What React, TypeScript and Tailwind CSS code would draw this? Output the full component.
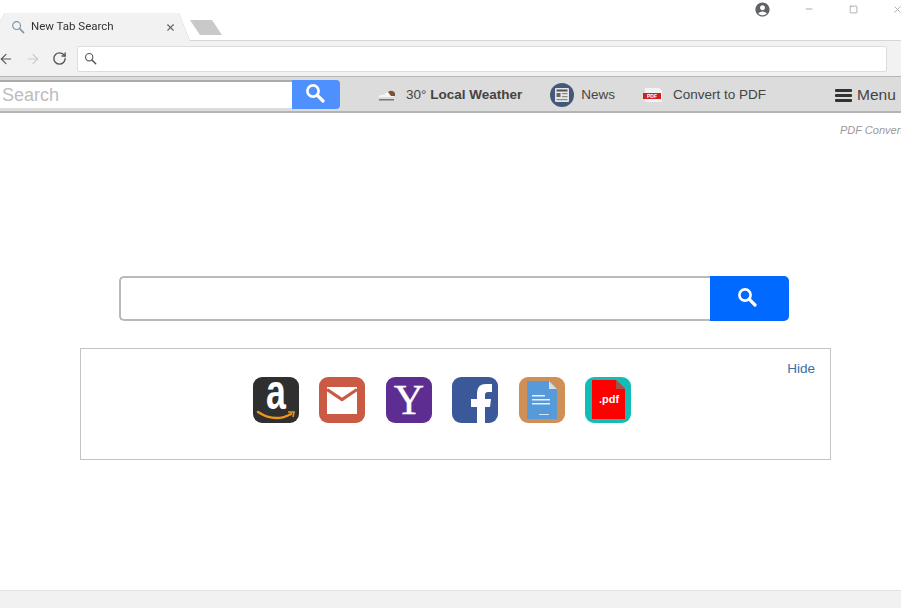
import type { ReactNode } from 'react';
import { ArrowLeft, ArrowRight, RotateCw, X, Minus, Square } from 'lucide-react';
import { MdAccountCircle } from 'react-icons/md';

const sans = 'font-["Liberation_Sans",Arial,sans-serif]';

const Tile = ({ className, children }: { className: string; children: ReactNode }) => (
  <div className={`w-[46px] h-[46px] rounded-[9px] overflow-hidden ${className}`}>
    <svg viewBox="0 0 46 46" className="w-full h-full">{children}</svg>
  </div>
);

// magnifier with a short heavy handle, like the one in the reference
const Glass = ({ className, width = 2.4 }: { className: string; width?: number }) => (
  <svg viewBox="0 0 20 20" className={className} fill="none" stroke="currentColor">
    <circle cx="8" cy="8" r="5.6" strokeWidth={width} />
    <path d="M12.2 12.2 L18 18" strokeWidth={width + 0.6} strokeLinecap="round" />
  </svg>
);

export default function App() {
  return (
    <div className={`w-[908px] h-[608px] bg-white overflow-hidden ${sans}`}>
      <div className="w-[901px] h-full flex flex-col overflow-hidden">
        {/* tab strip */}
        <div className="h-[41px] flex items-end relative shrink-0 border-b border-[#d6d6d6]">
          <div className="-mb-px [filter:drop-shadow(0_0_0.6px_#aaa)]">
            <div className="w-[190px] h-[28px] bg-[#f2f2f2] flex items-center pl-[11px] font-['Roboto',sans-serif] [clip-path:polygon(0_8px,5px_0,179px_0,190px_100%,0_100%)]">
              <Glass className="w-[14px] h-[14px] text-[#7d93a8]" width={1.6} />
              <span className="ml-[6px] text-[11.5px] text-[#333]">New Tab Search</span>
              <X size={11} strokeWidth={2.5} className="ml-[51px] text-[#666]" />
            </div>
          </div>
          <div className="w-[32px] h-[15px] mb-[5px] bg-[#c9c9c9] [clip-path:polygon(0_0,22px_0,100%_100%,10px_100%)]" />
          <MdAccountCircle size={17} className="absolute left-[754px] top-[1px] text-[#5f6368]" />
          <Minus size={10} className="absolute left-[804px] top-[4px] text-[#999]" />
          <Square size={9} strokeWidth={1.5} className="absolute left-[849px] top-[5px] text-[#777]" />
          <X size={11} className="absolute left-[892px] top-[4px] text-[#aaa]" />
        </div>

        {/* address bar */}
        <div className="h-[35px] bg-[#f2f2f2] flex items-center shrink-0 pr-[14px]">
          <ArrowLeft size={16} strokeWidth={1.6} className="-ml-[2px] text-[#555]" />
          <ArrowRight size={16} strokeWidth={1.6} className="ml-[11px] text-[#c8c8c8]" />
          <RotateCw size={15} strokeWidth={2.2} className="ml-[11px] text-[#555]" />
          <div className="ml-[10px] flex-1 h-[26px] bg-white border border-[#dcdcdc] rounded-[2px] flex items-center pl-[6px]">
            <Glass className="w-[13px] h-[13px] text-[#555]" width={1.7} />
          </div>
        </div>

        {/* search toolbar */}
        <div className="h-[37px] bg-[#dcdcdc] border-t border-b-2 border-[#b4b4b4] flex items-center shrink-0 text-[13.5px] text-[#444]">
          <div className="w-[292px] h-[28px] bg-white border-t-2 border-[#aaa] flex items-center pl-[2px] text-[18px] text-[#bdbdbd]">Search</div>
          <div className="w-[48px] h-[29px] bg-[#4d90fe] rounded-r-[4px] flex items-center justify-center">
            <Glass className="w-[20px] h-[20px] text-white mr-[3px] mb-[2px]" width={2.6} />
          </div>
          <div className="flex items-center mt-[2px]">
            <svg viewBox="0 0 20 12" className="ml-[37px] w-[20px] h-[12px]">
              <path d="M1 9 Q3 5 7 6 Q9 2 13 4 L17 8 H2Z" fill="#f7f7f7" />
              <path d="M11 3 Q15 0 18 4 L18 7 L14 7Z" fill="#7a5235" />
              <rect x="2" y="10" width="15" height="1.5" fill="#777" />
            </svg>
            <span className="ml-[9px]">30° <b>Local Weather</b></span>
            <svg viewBox="0 0 24 24" className="ml-[28px] w-[24px] h-[24px]">
              <circle cx="12" cy="12" r="12" fill="#44597a" />
              <rect x="5" y="5" width="14" height="14" rx="1" fill="#e6e6e6" />
              <rect x="6.5" y="6.5" width="11" height="2" fill="#555" />
              <rect x="6.5" y="10" width="4" height="4" fill="#666" />
              <rect x="12" y="10" width="5.5" height="1.2" fill="#888" />
              <rect x="12" y="13" width="5.5" height="1.2" fill="#888" />
              <rect x="6.5" y="16" width="11" height="1.2" fill="#888" />
            </svg>
            <span className="ml-[7px]">News</span>
            <svg viewBox="0 0 22 18" className="ml-[27px] w-[22px] h-[18px]">
              <path d="M3 2 H17 L20 5 V16 H3Z" fill="#f3f3f3" />
              <rect x="1" y="7" width="18" height="6" fill="#d01f1f" />
              <text x="10" y="12" textAnchor="middle" fontSize="5" fontWeight="700" fill="#fff" fontFamily="Liberation Sans">PDF</text>
            </svg>
            <span className="ml-[9px]">Convert to PDF</span>
            <div className="ml-[69px] w-[17px] h-[13px] flex flex-col justify-between">
              <div className="h-[3px] rounded-[1px] bg-[#333]" />
              <div className="h-[3px] rounded-[1px] bg-[#333]" />
              <div className="h-[3px] rounded-[1px] bg-[#333]" />
            </div>
            <span className="ml-[5px] text-[15.5px]">Menu</span>
          </div>
        </div>

        {/* page */}
        <div className="flex-1 relative flex flex-col overflow-hidden">
          <div className="absolute left-[840px] top-[9px] text-[11px] italic text-[#999] whitespace-nowrap">PDF Converter</div>

          <div className="ml-[119px] mt-[163px] w-[670px] h-[45px] flex">
            <div className="flex-1 border-2 border-r-0 border-[#b9b9b9] rounded-l-[5px] bg-white" />
            <div className="w-[79px] bg-[#0069ff] rounded-r-[5px] flex items-center justify-center">
              <Glass className="w-[20px] h-[20px] text-white mr-[5px] mb-[3px]" width={2.6} />
            </div>
          </div>

          <div className="ml-[80px] mt-[27px] w-[751px] h-[112px] border border-[#c4c4c4] relative flex pt-[28px] pl-[172px] gap-[20.4px]">
            <span className="absolute right-[15px] top-[10px] text-[13.5px] text-[#3a6ea5]">Hide</span>
            <Tile className="bg-[#2f2f2f]">
              <text transform="translate(23 32) scale(0.85 1.2)" textAnchor="middle" fontSize="42" fontWeight="700" fill="#fff" fontFamily="Liberation Sans">a</text>
              <path d="M5 35 Q22 46 38 37" fill="none" stroke="#e8971d" strokeWidth="2.5" strokeLinecap="round" />
              <path d="M35 35 L41 35 L40 40" fill="none" stroke="#e8971d" strokeWidth="1.6" />
            </Tile>
            <Tile className="bg-[#cb5a44]">
              <rect x="8" y="10" width="30" height="27" fill="#fff" />
              <path d="M8 12.5 L23 22.5 L38 12.5" fill="none" stroke="#cb5a44" strokeWidth="3.2" />
            </Tile>
            <Tile className="bg-[#5e2d91]">
              <text x="23" y="37" textAnchor="middle" fontSize="42" fill="#fff" stroke="#fff" strokeWidth="0.4" fontFamily="Liberation Serif">Y</text>
            </Tile>
            <Tile className="bg-[#3b5998]">
              <path d="M25 46 V30 H19 V22 H25 V16 Q25 7 34 7 H40 V15 H36 Q33 15 33 18 V22 H39 L38 30 H33 V46Z" fill="#fff" />
            </Tile>
            <Tile className="bg-[#d08f55]">
              <path d="M8 4 H30 L38 12 V42 H8Z" fill="#579ad9" />
              <path d="M30 4 L38 12 H30Z" fill="#d9dde2" />
              <rect x="13" y="18" width="13" height="1.5" fill="#e8f1fa" />
              <rect x="13" y="22" width="18" height="1.5" fill="#e8f1fa" />
              <rect x="13" y="26" width="18" height="1.5" fill="#e8f1fa" />
              <rect x="20" y="37" width="10" height="1" fill="#cfe2f5" />
            </Tile>
            <Tile className="bg-[#12bdb5]">
              <path d="M7 3 H31 L40 12 V42 H7Z" fill="#ff0000" />
              <path d="M31 3 L40 12 H31Z" fill="#a8504a" />
              <text x="24" y="26" textAnchor="middle" fontSize="11" fontWeight="700" fill="#fff" fontFamily="Liberation Sans">.pdf</text>
            </Tile>
          </div>

          <div className="mt-auto h-[18px] bg-[#f1f1f1] border-t border-[#e2e2e2]" />
        </div>
      </div>
    </div>
  );
}
